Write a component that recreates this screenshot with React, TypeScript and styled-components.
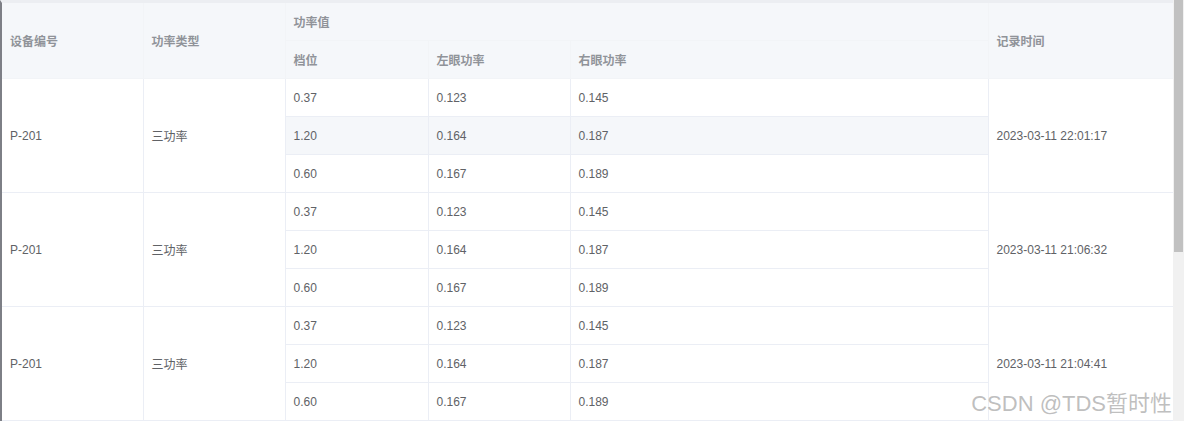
import React from "react";
import styled, { createGlobalStyle } from "styled-components";

const Global = createGlobalStyle`
  html, body { margin: 0; padding: 0; background: #fff; overflow: hidden; }
  body { font-family: "Liberation Sans", "Noto Sans CJK SC", sans-serif; }
`;

const Page = styled.div`
  display: flex;
  width: 1184px;
  height: 421px;
  overflow: hidden;
  position: relative;
`;

const Frame = styled.div`
  flex: 1;
  border-left: 2px solid #7d7f86;
  border-top: 3px solid #eceef2;
  overflow: hidden;
`;

const Table = styled.table`
  border-collapse: collapse;
  table-layout: fixed;
  width: 1171px;
  font-size: 12px;
`;

const Th = styled.th`
  background: #f5f7fa;
  color: #909399;
  font-weight: bold;
  text-align: left;
  padding: 0 0 0 8px;
  height: 37px;
  border-bottom: 1px solid #f2f4f7;
  border-right: 1px solid #f2f4f7;
`;

const Td = styled.td<{ $hl?: boolean }>`
  color: #606266;
  padding: 0 0 0 8px;
  height: 37px;
  border-bottom: 1px solid #ebeef5;
  border-right: 1px solid #ebeef5;
  background: ${(p) => (p.$hl ? "#f5f7fa" : "#fff")};
`;

const Scrollbar = styled.div`
  width: 11px;
  background: #f1f1f1;
  display: flex;
  flex-direction: column;
`;

const Thumb = styled.div`
  height: 252px;
  background: #c1c1c1;
  margin: 0 1px;
`;

const Watermark = styled.div`
  position: absolute;
  right: 12px;
  bottom: 4px;
  font-size: 22px;
  color: rgba(170, 170, 170, 0.75);
  font-family: "Liberation Sans", "Noto Sans CJK SC", sans-serif;
`;

const groups = [
  "2023-03-11 22:01:17",
  "2023-03-11 21:06:32",
  "2023-03-11 21:04:41",
];
const vals = [
  ["0.37", "0.123", "0.145"],
  ["1.20", "0.164", "0.187"],
  ["0.60", "0.167", "0.189"],
];

export default function App() {
  return (
    <>
      <Global />
      <Page>
        <Frame>
          <Table>
            <colgroup>
              <col style={{ width: 141 }} />
              <col style={{ width: 142 }} />
              <col style={{ width: 143 }} />
              <col style={{ width: 142 }} />
              <col style={{ width: 418 }} />
              <col style={{ width: 185 }} />
            </colgroup>
            <thead>
              <tr>
                <Th rowSpan={2}>设备编号</Th>
                <Th rowSpan={2}>功率类型</Th>
                <Th colSpan={3}>功率值</Th>
                <Th rowSpan={2}>记录时间</Th>
              </tr>
              <tr>
                <Th>档位</Th>
                <Th>左眼功率</Th>
                <Th>右眼功率</Th>
              </tr>
            </thead>
            <tbody>
              {groups.map((t, gi) =>
                vals.map((v, i) => (
                  <tr key={gi + "-" + i}>
                    {i === 0 && <Td rowSpan={3}>P-201</Td>}
                    {i === 0 && <Td rowSpan={3}>三功率</Td>}
                    <Td $hl={gi === 0 && i === 1}>{v[0]}</Td>
                    <Td $hl={gi === 0 && i === 1}>{v[1]}</Td>
                    <Td $hl={gi === 0 && i === 1}>{v[2]}</Td>
                    {i === 0 && <Td rowSpan={3}>{t}</Td>}
                  </tr>
                ))
              )}
            </tbody>
          </Table>
        </Frame>
        <Scrollbar>
          <Thumb />
        </Scrollbar>
        <Watermark>CSDN @TDS暂时性</Watermark>
      </Page>
    </>
  );
}
